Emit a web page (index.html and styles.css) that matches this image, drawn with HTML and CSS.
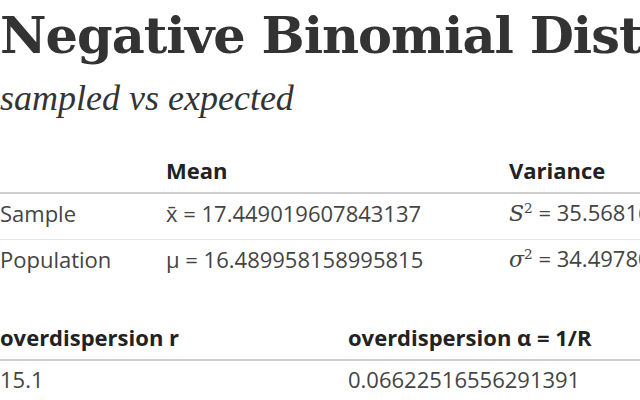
FILE: index.html
```html
<!DOCTYPE html>
<html>
<head>
<meta charset="utf-8">
<link rel="stylesheet" href="styles.css">
</head>
<body>
<div class="page">
  <h1 class="title">Negative Binomial Distribution</h1>
  <h2 class="subtitle">sampled vs expected</h2>
  <table class="stats stats-main">
    <thead>
      <tr><th class="c1"></th><th class="c2">Mean</th><th class="c3">Variance</th></tr>
    </thead>
    <tbody>
      <tr><td>Sample</td><td>x̄ = 17.449019607843137</td><td><span class="math">S<sup>2</sup></span> = 35.568161434977575</td></tr>
      <tr><td>Population</td><td>μ = 16.489958158995815</td><td><span class="math">σ<sup>2</sup></span> = 34.497802837468533</td></tr>
    </tbody>
  </table>
  <table class="stats stats-over">
    <thead>
      <tr><th class="o1">overdispersion r</th><th class="o2">overdispersion α = 1/R</th></tr>
    </thead>
    <tbody>
      <tr><td>15.1</td><td>0.06622516556291391</td></tr>
    </tbody>
  </table>
</div>
</body>
</html>
```
FILE: styles.css
```css
html, body {
  margin: 0;
  padding: 0;
  background: #fff;
  overflow: hidden;
}
.page {
  color: #333;
  font-family: "Open Sans", sans-serif;
  width: 1000px;
}
.title {
  font-family: "DejaVu Serif", serif;
  font-weight: bold;
  font-size: 51px;
  line-height: 60px;
  letter-spacing: -1px;
  margin: 0;
  padding-top: 5px;
  white-space: nowrap;
  color: #333;
}
.subtitle {
  font-family: "Liberation Serif", serif;
  font-style: italic;
  font-weight: normal;
  font-size: 36px;
  line-height: 40px;
  margin: 13px 0 0 0;
  color: #333;
}
.stats {
  border-collapse: collapse;
  font-size: 22px;
  line-height: 33px;
  white-space: nowrap;
}
.stats-main {
  margin-top: 36px;
}
.stats-over {
  margin-top: 36px;
  width: 100%;
}
.stats th {
  text-align: left;
  font-weight: bold;
  color: #222;
  padding: 0 0 5px 0;
  border-bottom: 2px solid #cfcfcf;
}
.stats td {
  color: #444;
  padding: 2px 0 9px 0;
  border-bottom: 1px solid #e6e6e6;
}
.stats tbody tr:last-child td {
  border-bottom: none;
}
.c1 { width: 166px; }
.c2 { width: 343px; }
.o1 { width: 348px; }
.math {
  font-family: "DejaVu Serif", "Liberation Serif", serif;
  font-style: italic;
}
.math sup {
  font-size: 0.62em;
  font-style: normal;
  line-height: 0;
}
```
